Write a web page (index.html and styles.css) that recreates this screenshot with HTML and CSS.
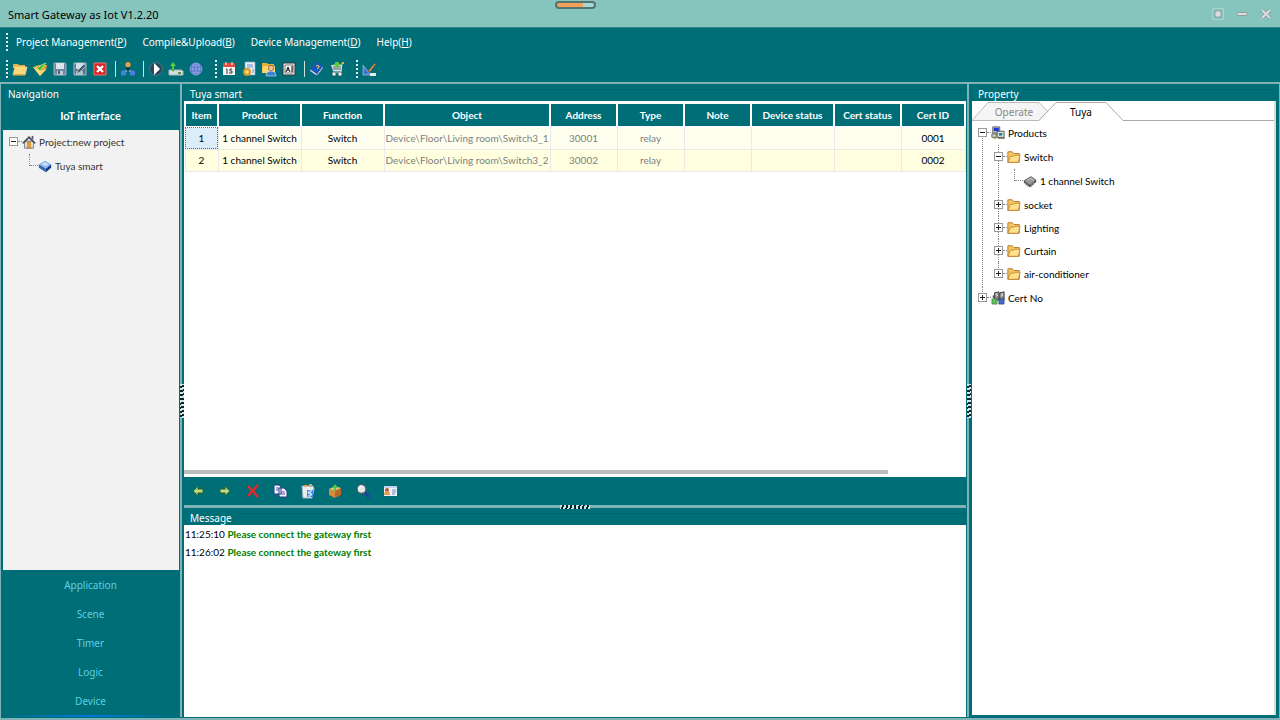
FILE: index.html
```html
<!DOCTYPE html>
<html lang="en">
<head>
<meta charset="utf-8">
<title>Smart Gateway as Iot V1.2.20</title>
<link rel="stylesheet" href="styles.css">
</head>
<body>

<svg class="defs" aria-hidden="true">
    <symbol id="open" viewBox="0 0 16 16"><path d="M1 3h5l1 1h6v3H1z" fill="#e9b347"/><path d="M3 6h12l-2 8H1z" fill="#fbd978" stroke="#f9e3a2" stroke-width=".7"/><path d="M1 14h12" stroke="#b9852a"/></symbol>
    <symbol id="import" viewBox="0 0 16 16"><path d="M1 6l6-2h8l-1 5-6 6z" fill="#e5a52d"/><path d="M1 6l7 9 6-7-5 2z" fill="#fadb7b"/><path d="M4 6l4 4 6-8-5 2-2 2z" fill="#45b936" stroke="#dff2b8" stroke-width=".6"/></symbol>
    <symbol id="save" viewBox="0 0 16 16"><path d="M2 2h11l1 1v11H2z" fill="#72879b" stroke="#9eb5c8"/><path d="M4 2h8v6H4z" fill="#dce5ed"/><path d="M5 10h6v4H5z" fill="#becbd6"/><path d="M6 10h2v3H6z" fill="#4a6076"/></symbol>
    <symbol id="saveas" viewBox="0 0 16 16"><path d="M2 2h12v12H2z" fill="#5c748a" stroke="#a9bccb"/><path d="M4 2h8v6H4z" fill="#d1dfe9"/><path d="M4 10h7v4H4z" fill="#aebfcd"/><path d="M4 13l2-4 6-6 2 2-6 6z" fill="#455e78" stroke="#d8e4ed" stroke-width=".6"/></symbol>
    <symbol id="close" viewBox="0 0 16 16"><path d="M2 2h12v12H2z" fill="#d92526" stroke="#ef7773"/><path d="M5 5l6 6M11 5l-6 6" stroke="#fff" stroke-width="2.4"/></symbol>
    <symbol id="network" viewBox="0 0 16 16"><path d="M8 4v4L4 12M8 8l4 4" stroke="#bcd4e6" stroke-width="1.6" fill="none"/><circle cx="8" cy="3.500" r="2.600" fill="#f0a33c"/><circle cx="3.500" cy="12" r="2.700" fill="#4a80d8"/><circle cx="12.500" cy="12" r="2.700" fill="#4a80d8"/><circle cx="8" cy="8" r="2" fill="#16394f"/></symbol>
    <symbol id="play" viewBox="0 0 16 16"><circle cx="8" cy="8" r="6.5" fill="#26495a" stroke="#477888"/><path d="M6 2l6 6-6 6z" fill="#fff"/></symbol>
    <symbol id="upload" viewBox="0 0 16 16"><path d="M1 9h12l2 1v4H1z" fill="#d8dddd" stroke="#a9b9ba"/><path d="M10 12h3" stroke="#55914c" stroke-width="2"/><path d="M4 10V5H2l3-4 3 4H6v5z" fill="#5ed64e" stroke="#278e31" stroke-width=".5"/></symbol>
    <symbol id="globe" viewBox="0 0 16 16"><circle cx="8" cy="8" r="6" fill="#5a74cb" stroke="#7894e4"/><path d="M2 8h12M8 2v12M4 4q4 2 8 0M4 12q4-2 8 0M7 2q-5 6 0 12M9 2q5 6 0 12" fill="none" stroke="#a9b9ee" stroke-width=".6"/></symbol>
    <symbol id="calendar" viewBox="0 0 16 16"><path d="M2 3h12v11H2z" fill="#f7f7f7"/><path d="M2 2h12v4H2z" fill="#e34b3c"/><path d="M5 1v3M11 1v3" stroke="#fff"/><path d="M5 8h1v5M11 8H9v2h2v2H8" fill="none" stroke="#333"/></symbol>
    <symbol id="script" viewBox="0 0 16 16"><path d="M4 1h10v13H4z" fill="#e8eef6" stroke="#8da5bf" stroke-width=".7"/><path d="M6 4h6M6 6h6M11 9h2M11 11h2" stroke="#7390bb"/><circle cx="6" cy="11" r="3.2" fill="#f2ba40" stroke="#d59428" stroke-width="1.5"/><circle cx="6" cy="11" r="1" fill="#fff2b0"/></symbol>
    <symbol id="users" viewBox="0 0 16 16"><path d="M1 2h5l1 1h6v9H1z" fill="#e9ae37"/><path d="M2 5h12v7H1z" fill="#fbd76f"/><circle cx="10" cy="7" r="2.7" fill="#f4c091" stroke="#78502e" stroke-width=".7"/><path d="M5 15q0-5 5-5t5 5z" fill="#3683d1" stroke="#fff" stroke-width=".5"/></symbol>
    <symbol id="ai" viewBox="0 0 16 16"><path d="M2 2h12v12H2z" fill="#eee" stroke="#31393d"/><path d="M4 4h8v8H4z" fill="#fff" stroke="#777"/><path d="M5 11l2-5 2 5M6 9h2M11 5v6" fill="none" stroke="#111"/></symbol>
    <symbol id="book" viewBox="0 0 16 16"><path d="M1 8l7-7 6 4-6 8z" fill="#1758c0"/><path d="M1 8l7 5v2L1 10zM8 13l6-8v2l-6 8z" fill="#e9f0f8" stroke="#1c4396" stroke-width=".5"/><path d="M7 5q2-1 3 0t-2 3" fill="none" stroke="#ffdb48"/></symbol>
    <symbol id="cart" viewBox="0 0 16 16"><path d="M13 3l-1 7H4L2 4h11z" fill="#dce2e4"/><path d="M15 2h-2l-1 9H4" fill="none" stroke="#dce2e4"/><path d="M4 6h8M4 8h8" stroke="#536a70"/><path d="M6 1h4v2h2L8 7 4 3h2z" fill="#65c842"/><circle cx="5" cy="13" r="2" fill="#eee" stroke="#555" stroke-width=".5"/><circle cx="11" cy="13" r="2" fill="#eee" stroke="#555" stroke-width=".5"/><path d="M13 1h2v2h-2z" fill="#efa34d"/></symbol>
    <symbol id="design" viewBox="0 0 16 16"><path d="M1 4l8 10H1z" fill="#477dda" stroke="#b1c7ef" stroke-width=".6"/><path d="M3 10l2 2H3z" fill="#096b76"/><path d="M6 10l7-8 1 1-6 8z" fill="#e9a052" stroke="#613e2b" stroke-width=".6"/><path d="M8 12h6v3H8z" fill="#e9e9e9"/></symbol>
    <symbol id="back" viewBox="0 0 16 16"><path d="M3 8l5-5v3h5v4H8v3z" fill="#99c665" stroke="#315d26" stroke-width=".8"/><path d="M5 8h7" stroke="#e7eeb7"/></symbol>
    <symbol id="forward" viewBox="0 0 16 16"><path d="M13 8L8 3v3H3v4h5v3z" fill="#99c665" stroke="#315d26" stroke-width=".8"/><path d="M4 8h7" stroke="#e7eeb7"/></symbol>
    <symbol id="delete" viewBox="0 0 16 16"><path d="M3 3l10 11M13 2L3 13" stroke="#ed2424" stroke-width="2.400"/></symbol>
    <symbol id="copy" viewBox="0 0 16 16"><path d="M2 2h5l2 2v7H2zM7 5h5l3 3v6H7z" fill="#f3f5ff" stroke="#293a83"/><path d="M4 5h3M4 7h3M9 9h4M9 11h4" stroke="#4b5ca4"/></symbol>
    <symbol id="paste" viewBox="0 0 16 16"><path d="M2 3h11l1 3-2 9H3z" fill="#e8edf0" stroke="#9bb7c6"/><path d="M4 2h3v2H4zM9 1h3v3H9z" fill="#d7a46c"/><path d="M7 7h6v7H7z" fill="#3f85e8"/><path d="M12 8q-3-1-4 2h3M8 13q3 1 4-2H9" fill="none" stroke="#fff"/></symbol>
    <symbol id="package" viewBox="0 0 16 16"><path d="M2 6l6 2v7l-6-3z" fill="#d88b3e"/><path d="M8 8l6-3v7l-6 3z" fill="#b86828"/><path d="M2 6l6-3 6 2-6 3z" fill="#edbd76"/><path d="M7 8V5H5l3-4 3 4H9v3z" fill="#52c849"/></symbol>
    <symbol id="search" viewBox="0 0 16 16"><path d="M10 10l4 4" stroke="#243ca8" stroke-width="3"/><circle cx="6.500" cy="6" r="4.500" fill="#dceaf0" stroke="#4c5960" stroke-width="1.400"/><path d="M4 6q0-3 3-3" fill="none" stroke="#fff" stroke-width="1.500"/></symbol>
    <symbol id="card" viewBox="0 0 16 16"><path d="M2 3h13v10H2z" fill="#edf3fb"/><path d="M2 3h13v2H2z" fill="#c4d3ef"/><circle cx="5" cy="7" r="2" fill="#b65627"/><path d="M2 12q0-4 3-4t3 4z" fill="#e79c55"/><path d="M10 7h4M10 9h4M10 11h3" stroke="#6d8bc8"/></symbol>
    <symbol id="house" viewBox="0 0 16 16"><path d="M3 7h10v8H3z" fill="#eef0f5" stroke="#66697a"/><path d="M0 9l8-8 8 8-2 1-6-6-6 6z" fill="#4a4a57"/><path d="M11 1h2v4h-2z" fill="#555b80"/><path d="M6 8h4v7H6z" fill="#eda12c" stroke="#a06515" stroke-width=".6"/></symbol>
    <symbol id="cube" viewBox="0 0 16 16"><path d="M1 6l7-4 7 4-6 5z" fill="#8eb9ef"/><path d="M1 6l8 5v4l-8-5z" fill="#3467b7"/><path d="M9 11l6-5v4l-6 5z" fill="#13377f"/><path d="M4 6l4-2 4 2-3 2z" fill="#d2e5fa"/></symbol>
    <symbol id="folder" viewBox="0 0 16 16"><path d="M1 2h5l2 2h6v10H1z" fill="#f5c563" stroke="#b1741d"/><path d="M4 7h4l1-1h6l-2 8H1z" fill="#ffe08d" stroke="#b1741d" stroke-width=".8"/></symbol>
    <symbol id="chip" viewBox="0 0 16 16"><path d="M1 8l8-5 6 4-7 6z" fill="#999" stroke="#555"/><path d="M1 8l7 5v2l-7-5zM8 13l7-6v2l-7 6z" fill="#444"/><path d="M3 10v3M5 12v3M10 12v3M12 10v3" stroke="#aaa"/><path d="M5 7l4-2 3 2" fill="none" stroke="#ccc"/></symbol>
    <symbol id="computers" viewBox="0 0 16 16"><path d="M2 1h8v7H2z" fill="#ddd" stroke="#555"/><path d="M3 2h6v4H3z" fill="#2437ce"/><path d="M7 6h8v7H7z" fill="#e5e5e5" stroke="#444"/><path d="M9 8h4v3H9z" fill="#138b8a"/><path d="M1 9h5v4H1zM8 14h8" fill="#ccc" stroke="#555"/><path d="M2 13l3 2 2-3" fill="none" stroke="#c3ac24"/></symbol>
    <symbol id="servers" viewBox="0 0 16 16"><path d="M4 2l5-1v9l-5 2zM10 2l5-1v9l-5 2z" fill="#888" stroke="#333"/><path d="M5 4l3-1M5 6l3-1M11 4l3-1M11 6l3-1" stroke="#eee"/><path d="M1 9h6v6H1z" fill="#54c55a" stroke="#555" stroke-width=".6"/><path d="M9 9h6v6H9z" fill="#3f68db" stroke="#333" stroke-width=".6"/><path d="M2 5h3v3H2z" fill="#555"/></symbol>
</svg>

<header class="title-bar">
    <h1>Smart Gateway as Iot V1.2.20</h1>
    <div class="progress"></div>
    <div class="window-buttons">
        <button aria-label="Restore"><svg viewBox="0 0 12 12"><path d="M.5.5h11v11H.5z" fill="none" stroke="#aad6d1"/><path d="M3 3h6v6H3z" fill="#ddd" stroke="#8a9f9d"/></svg></button>
        <button aria-label="Minimize"><svg viewBox="0 0 12 12"><rect x="1" y="4.500" width="10" height="3" rx="1" fill="#ddd" stroke="#8a9f9d"/></svg></button>
        <button aria-label="Close"><svg viewBox="0 0 12 12"><path d="M2 2l8 8M10 2l-8 8" stroke="#8a9f9d" stroke-width="3.600"/><path d="M2 2l8 8M10 2l-8 8" stroke="#ddd" stroke-width="2"/></svg></button>
    </div>
</header>

<nav class="menu">
    <i class="grip"></i>
    <button>Project Management(<u>P</u>)</button>
    <button>Compile&amp;Upload(<u>B</u>)</button>
    <button>Device Management(<u>D</u>)</button>
    <button>Help(<u>H</u>)</button>
</nav>

<div class="toolbar">
    <i class="grip"></i>
    <button aria-label="Open"><svg><use href="#open"/></svg></button>
    <button aria-label="Import"><svg><use href="#import"/></svg></button>
    <button aria-label="Save"><svg><use href="#save"/></svg></button>
    <button aria-label="Save as"><svg><use href="#saveas"/></svg></button>
    <button aria-label="Close project"><svg><use href="#close"/></svg></button>
    <i class="sep"></i>
    <button aria-label="Network"><svg><use href="#network"/></svg></button>
    <i class="sep"></i>
    <button aria-label="Compile"><svg><use href="#play"/></svg></button>
    <button aria-label="Upload"><svg><use href="#upload"/></svg></button>
    <button aria-label="Online"><svg><use href="#globe"/></svg></button>
    <i class="grip next"></i>
    <button aria-label="Calendar"><svg><use href="#calendar"/></svg></button>
    <button aria-label="Script"><svg><use href="#script"/></svg></button>
    <button aria-label="Users"><svg><use href="#users"/></svg></button>
    <button aria-label="Labels"><svg><use href="#ai"/></svg></button>
    <i class="sep"></i>
    <button aria-label="Manual"><svg><use href="#book"/></svg></button>
    <button aria-label="Store"><svg><use href="#cart"/></svg></button>
    <i class="grip next"></i>
    <button aria-label="Design"><svg><use href="#design"/></svg></button>
</div>

<main>
    <aside class="panel navigation">
        <h2 class="legend">Navigation</h2>
        <button class="section current">IoT interface</button>
        <div class="project">
            <ul class="tree">
                <li>
                    <div class="node"><button class="box" aria-label="Collapse"></button><i class="link"></i><svg><use href="#house"/></svg><span>Project:new project</span></div>
                    <ul>
                        <li><div class="node"><i class="link long"></i><svg><use href="#cube"/></svg><span>Tuya smart</span></div></li>
                    </ul>
                </li>
            </ul>
        </div>
        <button class="section">Application</button>
        <button class="section">Scene</button>
        <button class="section">Timer</button>
        <button class="section">Logic</button>
        <button class="section">Device</button>
        <div class="glow"></div>
    </aside>

    <div class="splitter"><i></i></div>

    <div class="center">
        <section class="panel devices">
            <h2 class="legend">Tuya smart</h2>
            <div class="grid">
                <table>
                    <colgroup><col class="c-item"><col class="c-wide"><col class="c-wide"><col><col class="c-mid"><col class="c-mid"><col class="c-mid"><col class="c-wide"><col class="c-mid"><col class="c-id"></colgroup>
                    <thead>
                        <tr><th>Item</th><th>Product</th><th>Function</th><th>Object</th><th>Address</th><th>Type</th><th>Note</th><th>Device status</th><th>Cert status</th><th>Cert ID</th></tr>
                    </thead>
                    <tbody>
                        <tr><td class="selected">1</td><td>1 channel Switch</td><td>Switch</td><td class="dim">Device\Floor\Living room\Switch3_1</td><td class="dim">30001</td><td class="dim">relay</td><td></td><td></td><td></td><td>0001</td></tr>
                        <tr><td>2</td><td>1 channel Switch</td><td>Switch</td><td class="dim">Device\Floor\Living room\Switch3_2</td><td class="dim">30002</td><td class="dim">relay</td><td></td><td></td><td></td><td>0002</td></tr>
                    </tbody>
                </table>
                <div class="scrollbar"></div>
            </div>
            <div class="grid-tools">
                <button aria-label="Back"><svg><use href="#back"/></svg></button>
                <button aria-label="Forward"><svg><use href="#forward"/></svg></button>
                <button aria-label="Delete"><svg><use href="#delete"/></svg></button>
                <button aria-label="Copy"><svg><use href="#copy"/></svg></button>
                <button aria-label="Paste"><svg><use href="#paste"/></svg></button>
                <button aria-label="Export"><svg><use href="#package"/></svg></button>
                <button aria-label="Search"><svg><use href="#search"/></svg></button>
                <button aria-label="Card"><svg><use href="#card"/></svg></button>
            </div>
        </section>
        <div class="splitter flat"><i></i></div>
        <section class="panel messages">
            <h2 class="legend">Message</h2>
            <div class="log">
                <p>11:25:10 <b>Please connect the gateway first</b></p>
                <p>11:26:02 <b>Please connect the gateway first</b></p>
            </div>
        </section>
    </div>

    <div class="splitter"><i></i></div>

    <aside class="panel property">
        <h2 class="legend">Property</h2>
        <div class="sheet">
            <div class="tabs">
                <svg viewBox="0 0 152 20"><path d="M0 19.500L16 1.500h51l9 9-9 9z" fill="#f5f5f5" stroke="#bbb"/><path d="M67 19.500l17-18h50l17 18" fill="#fff" stroke="#aaa"/></svg>
                <button class="off">Operate</button>
                <button>Tuya</button>
            </div>
            <ul class="tree">
                <li>
                    <div class="node"><button class="box" aria-label="Collapse"></button><i class="link"></i><svg><use href="#computers"/></svg><span>Products</span></div>
                    <ul>
                        <li>
                            <div class="node"><button class="box" aria-label="Collapse"></button><i class="link"></i><svg><use href="#folder"/></svg><span>Switch</span></div>
                            <ul>
                                <li><div class="node"><i class="link long"></i><svg><use href="#chip"/></svg><span>1 channel Switch</span></div></li>
                            </ul>
                        </li>
                        <li><div class="node"><button class="box plus" aria-label="Expand"></button><i class="link"></i><svg><use href="#folder"/></svg><span>socket</span></div></li>
                        <li><div class="node"><button class="box plus" aria-label="Expand"></button><i class="link"></i><svg><use href="#folder"/></svg><span>Lighting</span></div></li>
                        <li><div class="node"><button class="box plus" aria-label="Expand"></button><i class="link"></i><svg><use href="#folder"/></svg><span>Curtain</span></div></li>
                        <li><div class="node"><button class="box plus" aria-label="Expand"></button><i class="link"></i><svg><use href="#folder"/></svg><span>air-conditioner</span></div></li>
                    </ul>
                </li>
                <li><div class="node"><button class="box plus" aria-label="Expand"></button><i class="link"></i><svg><use href="#servers"/></svg><span>Cert No</span></div></li>
            </ul>
        </div>
    </aside>
</main>

</body>
</html>
```

FILE: styles.css
```css
* { box-sizing: border-box; }
body { margin: 0; min-height: 100vh; display: flex; flex-direction: column; background: #006e77; color: #000; font-family: "Noto Sans", "Open Sans", sans-serif; font-size: 10px; }
h1, h2, p, ul { margin: 0; padding: 0; font-size: inherit; font-weight: normal; }
ul { list-style: none; }
button { padding: 0; border: none; background: none; color: inherit; font: inherit; cursor: pointer; }
svg { display: block; width: 16px; height: 16px; flex: none; }
.defs { display: none; }
table, .tree, .log, .section.current { font-family: Lato, "Noto Sans", sans-serif; }

/* title bar */
.title-bar { display: grid; grid-template-columns: 1fr auto 1fr; height: 28px; padding: 1px 8px 0; background: #86c5be; border-bottom: 1px solid #30858c; }
.title-bar h1 { font-size: 11px; line-height: 28px; }
.progress { width: 41px; height: 8px; margin-right: 130px; border: 2px solid #55736f; border-radius: 4px; background: linear-gradient(90deg, #f3a05a 70%, #a5d8d2 70%); }
.window-buttons { display: flex; justify-content: flex-end; align-items: center; gap: 12px; padding-bottom: 3px; }
.window-buttons svg { width: 12px; height: 12px; }

/* menu and toolbar */
.menu { display: flex; align-items: center; gap: 16px; height: 28px; padding-left: 6px; color: #fff; }
.menu .grip { margin-right: -8px; }
.grip { flex: none; width: 2px; height: 18px; background: repeating-linear-gradient(#e4efef 0 2px, transparent 2px 4px); }
.grip.next { margin-left: 7px; }
.toolbar { display: flex; align-items: center; gap: 4px; height: 26px; padding-left: 6px; }
.sep { width: 4px; height: 16px; border-right: 1px solid #cfe0df; }

/* panels */
main { flex: 1; display: grid; grid-template-columns: 177px 5px minmax(0, 1fr) 5px 307px; padding: 0 1px 1px; border-top: 2px solid #7fb3b7; border-left: 1px solid #7fb3b7; border-bottom: 2px solid #7fb3b7; border-right: 1px solid #7fb3b7; }
.panel { display: flex; flex-direction: column; min-width: 0; }
.legend { display: flex; align-items: center; gap: 4px; height: 17px; padding: 2px 0 0 6px; color: #fff; }
.legend::after { content: ""; flex: 1; height: 8px; border-top: 1px solid #00626a; border-top-right-radius: 4px; }
.splitter { display: flex; align-items: center; justify-content: center; background: linear-gradient(90deg, transparent 1px, #7fb3b7 1px 3px, transparent 3px); }
.splitter i { width: 4px; height: 34px; background: repeating-linear-gradient(165deg, #cfe4e6 0 2px, #06282b 2px 4px); }
.splitter.flat { height: 3px; background: #7fb3b7; }
.splitter.flat i { width: 30px; height: 4px; background: repeating-linear-gradient(105deg, #cfe4e6 0 2px, #06282b 2px 4px); }

/* navigation */
.section { height: 29px; color: #5cd0e0; }
.section.current { color: #fff; font-weight: bold; font-size: 11px; }
.project { flex: 1; margin-left: 1px; padding: 0 6px; background: #f2f2f2; }
.navigation .tree { color: #333; }
.glow { height: 2px; background: linear-gradient(90deg, transparent, #0078e0, transparent); }

/* trees */
.tree li { position: relative; }
.tree li::before { content: ""; position: absolute; left: 4px; top: 0; bottom: 0; border-left: 1px dotted #888; }
.tree li:last-child::before { bottom: auto; height: 12px; }
.tree > li:first-child::before { top: 12px; }
.tree > li:only-child::before { display: none; }
.tree ul { margin: 1px 0; padding-left: 16px; }
.node { display: flex; align-items: center; height: 23px; }
.node svg { width: 14px; height: 14px; margin-right: 3px; }
.box { position: relative; width: 9px; height: 9px; border: 1px solid #999; background: linear-gradient(#222, #222) center / 5px 1px no-repeat #fff; }
.box.plus { background: linear-gradient(#222, #222) center / 5px 1px no-repeat, linear-gradient(#222, #222) center / 1px 5px no-repeat #fff; }
.link { width: 4px; border-top: 1px dotted #888; }
.link.long { width: 8px; margin-left: 5px; }

/* devices */
.center { display: flex; flex-direction: column; min-width: 0; }
.devices { flex: 1; }
.grid { flex: 1; display: flex; flex-direction: column; justify-content: space-between; padding: 1px 0 3px; background: #fff; }
table { width: 100%; table-layout: fixed; border-collapse: collapse; }
.c-item { width: 33px; }
.c-wide { width: 83px; }
.c-mid { width: 67px; }
.c-id { width: 64px; }
th { height: 24px; padding: 0; border: 2px solid #fff; background: #006e77; color: #fff; }
td { height: 22px; padding: 0; border: 1px solid #eaeaea; background: #ffffe0; text-align: center; white-space: nowrap; }
tbody tr:first-child td { background: #fffff0; }
tbody td.dim { color: #808080; }
tbody tr td.selected { background: #dcedfa; outline: 1px dotted #52697a; outline-offset: -1px; }
.scrollbar { width: 90%; height: 4px; background: #bdbdbd; }
.grid-tools { display: flex; justify-content: space-between; align-items: center; width: 214px; height: 28px; padding-left: 6px; }

/* messages */
.messages { flex: none; height: 209px; }
.log { flex: 1; background: #fff; padding-left: 1px; }
.log p { line-height: 18px; }
.log b { color: #008000; }

/* property */
.property { padding: 0 2px 2px 1px; }
.sheet { flex: 1; background: #fff; border-right: 2px solid #ddd; }
.tabs { position: relative; display: flex; height: 20px; background: linear-gradient(#aaa, #aaa) 151px 19px no-repeat; }
.tabs svg { position: absolute; left: 0; top: 0; width: 152px; height: 20px; }
.tabs button { position: relative; width: 67px; padding-left: 17px; padding-top: 2px; }
.tabs .off { color: #888; }
.property .tree { padding-left: 6px; }
```
